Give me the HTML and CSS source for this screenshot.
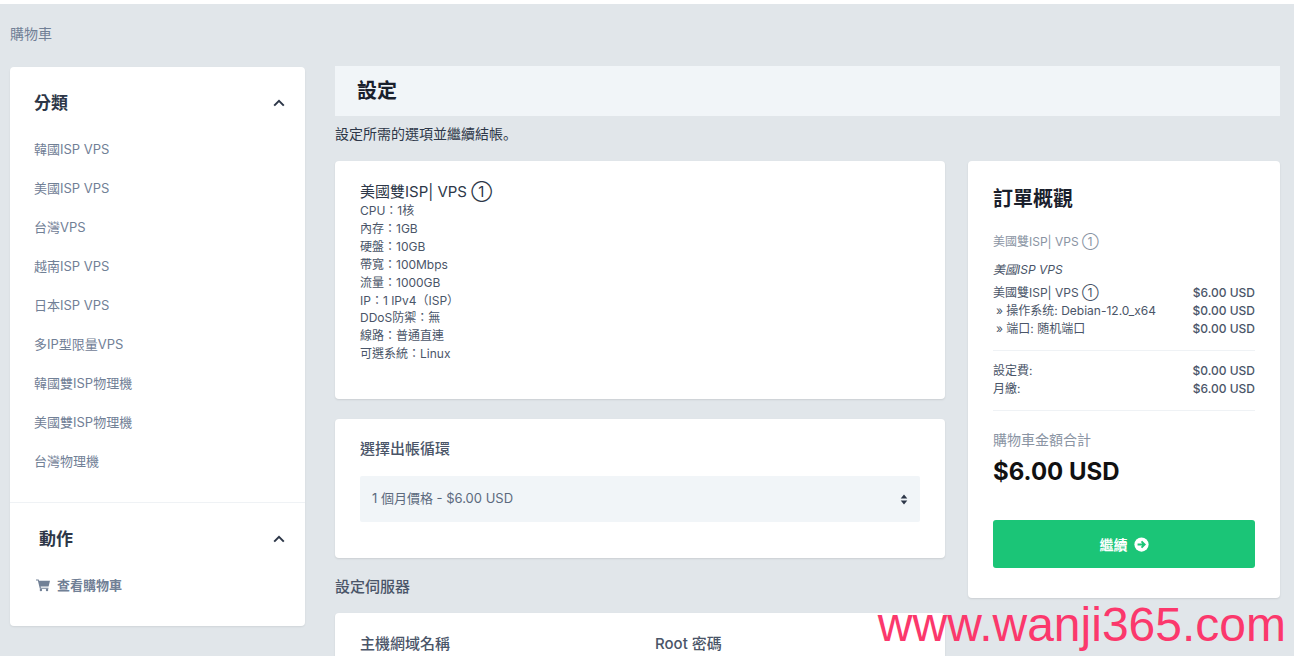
FILE: index.html
```html
<!DOCTYPE html>
<html lang="zh-Hant">
<head>
<meta charset="utf-8">
<title>購物車</title>
<link rel="stylesheet" href="styles.css">
</head>
<body>
<div class="page">
  <div class="breadcrumb">購物車</div>
  <div class="layout">
    <aside class="sidebar">
      <section class="side-group side-cats">
        <div class="side-head"><h3>分類</h3><svg class="chev" viewBox="0 0 12 8"><path d="M1.2 6.6 6 1.8l4.8 4.8" /></svg></div>
        <ul class="side-list">
          <li>韓國ISP VPS</li>
          <li>美國ISP VPS</li>
          <li>台灣VPS</li>
          <li>越南ISP VPS</li>
          <li>日本ISP VPS</li>
          <li>多IP型限量VPS</li>
          <li>韓國雙ISP物理機</li>
          <li>美國雙ISP物理機</li>
          <li>台灣物理機</li>
        </ul>
      </section>
      <section class="side-group side-actions">
        <div class="side-head side-head-inset"><h3>動作</h3><svg class="chev" viewBox="0 0 12 8"><path d="M1.2 6.6 6 1.8l4.8 4.8" /></svg></div>
        <div class="side-action">
          <svg class="cart" viewBox="0 0 16 14"><path d="M0 .6h3l.5 1.6H16l-1.6 6.6H5.3l.3 1.2h8.6v1.3H4.4L2.1 1.9H0z"/><circle cx="5.6" cy="12.6" r="1.4"/><circle cx="12.6" cy="12.6" r="1.4"/></svg>
          <span>查看購物車</span>
        </div>
      </section>
    </aside>
    <main class="main">
      <header class="title-bar"><h1>設定</h1></header>
      <p class="intro">設定所需的選項並繼續結帳<span lang="ja">。</span></p>
      <div class="columns">
        <div class="col-left">
          <section class="card product">
            <h2 class="product-name">美國雙ISP| VPS ①</h2>
            <div class="product-specs">
              <div>CPU：1核</div>
              <div>內存：1GB</div>
              <div>硬盤：10GB</div>
              <div>帶寬：100Mbps</div>
              <div>流量：1000GB</div>
              <div>IP：1 IPv4（ISP）</div>
              <div>DDoS防禦：無</div>
              <div>線路：普通直連</div>
              <div>可選系統：Linux</div>
            </div>
          </section>
          <section class="card billing">
            <h3 class="field-title">選擇出帳循環</h3>
            <div class="select">
              <span class="select-value">1 個月價格 - $6.00 USD</span>
              <svg class="updown" viewBox="0 0 8 12"><path d="M4 .5 7.6 4.8H.4zM4 11.5.4 7.2h7.2z"/></svg>
            </div>
          </section>
          <h3 class="section-title">設定伺服器</h3>
          <section class="card server">
            <h3 class="field-title">主機網域名稱</h3>
            <h3 class="field-title">Root 密碼</h3>
          </section>
        </div>
        <aside class="card summary">
          <h2 class="summary-title">訂單概觀</h2>
          <div class="sum-name">美國雙ISP| VPS ①</div>
          <div class="sum-group">美國ISP VPS</div>
          <div class="sum-rows">
            <div class="sum-row"><span>美國雙ISP| VPS ①</span><span class="amount">$6.00 USD</span></div>
            <div class="sum-row"><span class="sub">» 操作系统: Debian-12.0_x64</span><span class="amount">$0.00 USD</span></div>
            <div class="sum-row"><span class="sub">» 端口: 随机端口</span><span class="amount">$0.00 USD</span></div>
          </div>
          <div class="sum-rows sum-fees">
            <div class="sum-row"><span>設定費:</span><span class="amount">$0.00 USD</span></div>
            <div class="sum-row"><span>月繳:</span><span class="amount">$6.00 USD</span></div>
          </div>
          <div class="total-label">購物車金額合計</div>
          <div class="total">$6.00 USD</div>
          <div class="continue">
            <span>繼續</span>
            <svg class="go" viewBox="0 0 16 16"><circle cx="8" cy="8" r="7.6" fill="#fff"/><path d="M3.8 8h7.4M8 4.6 11.4 8 8 11.4" fill="none" stroke="#1bc577" stroke-width="2"/></svg>
          </div>
        </aside>
      </div>
    </main>
  </div>
  <div class="watermark">www.wanji365.com</div>
</div>
</body>
</html>
```
FILE: styles.css
```css
* { box-sizing: border-box; }
html, body { margin: 0; height: 100%; background: #fff; }
body {
  font-family: "Inter", "Noto Sans CJK TC", sans-serif;
  font-size: 13px;
  color: #4a5568;
  overflow: hidden;
}
h1, h2, h3, p, ul { margin: 0; padding: 0; }
ul { list-style: none; }
.page {
  position: relative;
  height: 652px;
  margin-top: 4px;
  padding: 0 14px 0 10px;
  background: #e1e6ea;
  overflow: hidden;
}
.breadcrumb {
  height: 63px;
  padding-top: 21px;
  font-size: 14px;
  line-height: 18px;
  color: #718096;
}
.layout { display: flex; gap: 30px; align-items: flex-start; }
.sidebar {
  flex: 0 0 295px;
  height: 559px;
  background: #fff;
  border-radius: 4px;
  box-shadow: 0 1px 2px rgba(0, 0, 0, .08);
  display: flex;
  flex-direction: column;
}
.side-group { padding: 0 20px 0 24px; }
.side-cats { height: 436px; padding-top: 24px; border-bottom: 1px solid #eff2f5; }
.side-head {
  display: flex;
  justify-content: space-between;
  align-items: center;
  height: 24px;
  color: #2d3748;
}
.side-head h3 { font-size: 17px; font-weight: 700; line-height: 24px; }
.side-head-inset h3 { padding-left: 5px; }
.chev { width: 12px; height: 8px; fill: none; stroke: #2d3748; stroke-width: 2; }
.side-list { margin-top: 15px; }
.side-list li {
  height: 39px;
  line-height: 39px;
  font-size: 13px;
  color: #718096;
}
.side-actions { padding-top: 24px; }
.side-action {
  display: flex;
  align-items: center;
  gap: 7px;
  margin-top: 22px;
  padding-left: 2px;
  font-size: 13px;
  line-height: 24px;
  color: #718096;
  font-weight: 700;
}
.cart { width: 14px; height: 14px; fill: #718096; }
.main { flex: 0 0 945px; margin-top: -1px; }
.title-bar {
  height: 50px;
  padding-left: 22px;
  background: #f1f5f8;
  display: flex;
  align-items: center;
}
.title-bar h1 { font-size: 20px; line-height: 48px; font-weight: 700; color: #1a202c; }
.intro { margin-top: 9px; font-size: 14px; line-height: 18px; color: #2d3748; }
.columns { display: flex; justify-content: space-between; align-items: flex-start; margin-top: 18px; }
.col-left { flex: 0 0 610px; }
.card {
  background: #fff;
  border-radius: 4px;
  box-shadow: 0 1px 2px rgba(0, 0, 0, .1);
}
.product { height: 238px; padding: 21px 25px 0; }
.product-name { font-size: 15px; line-height: 20px; font-weight: 400; color: #2d3748; }
.product-specs { font-size: 12px; line-height: 17.9px; color: #4a5568; }
.billing { height: 139px; margin-top: 20px; padding: 19px 25px 0; }
.field-title { font-size: 15px; line-height: 22px; font-weight: 500; color: #4a5568; }
.select {
  display: flex;
  justify-content: space-between;
  align-items: center;
  height: 46px;
  margin-top: 16px;
  padding: 0 12px;
  background: #f1f5f8;
  border-radius: 2px;
  font-size: 13px;
  color: #5c6a7e;
}
.select-value { padding-bottom: 3px; }
.updown { width: 8px; height: 11px; fill: #2d3748; }
.section-title { margin-top: 19px; font-size: 15px; line-height: 20px; font-weight: 500; color: #4a5568; }
.server {
  display: grid;
  grid-template-columns: 295px 1fr;
  height: 120px;
  margin-top: 16px;
  padding: 20px 25px 0;
}
.summary { flex: 0 0 312px; height: 437px; padding: 24px 25px 0; }
.summary-title { font-size: 20px; line-height: 28px; font-weight: 700; color: #1a202c; }
.sum-name { margin-top: 20px; font-size: 12px; line-height: 18px; color: #8a94a3; }
.sum-group { margin-top: 10px; font-size: 12px; line-height: 18px; font-style: italic; color: #4a5568; }
.sum-rows { margin-top: 5px; padding-bottom: 12px; border-bottom: 1px solid #eff2f5; }
.sum-fees { margin-top: 11px; }
.sum-row {
  display: flex;
  justify-content: space-between;
  font-size: 12px;
  line-height: 18px;
  color: #4a5568;
}
.amount { font-weight: 500; }
.sub { padding-left: 3px; }
.total-label { margin-top: 19px; font-size: 14px; line-height: 20px; color: #8a94a3; }
.total { margin-top: 6px; font-size: 24px; line-height: 32px; font-weight: 700; color: #111; }
.continue {
  display: flex;
  justify-content: center;
  align-items: center;
  gap: 6px;
  height: 48px;
  margin-top: 32px;
  background: #1bc577;
  border-radius: 3px;
  font-size: 14px;
  font-weight: 700;
  color: #fff;
}
.go { width: 15px; height: 15px; }
.watermark {
  position: absolute;
  right: 8px;
  bottom: 6px;
  font-family: "Liberation Sans", sans-serif;
  font-size: 48px;
  line-height: 50px;
  color: #fb386c;
}
```
